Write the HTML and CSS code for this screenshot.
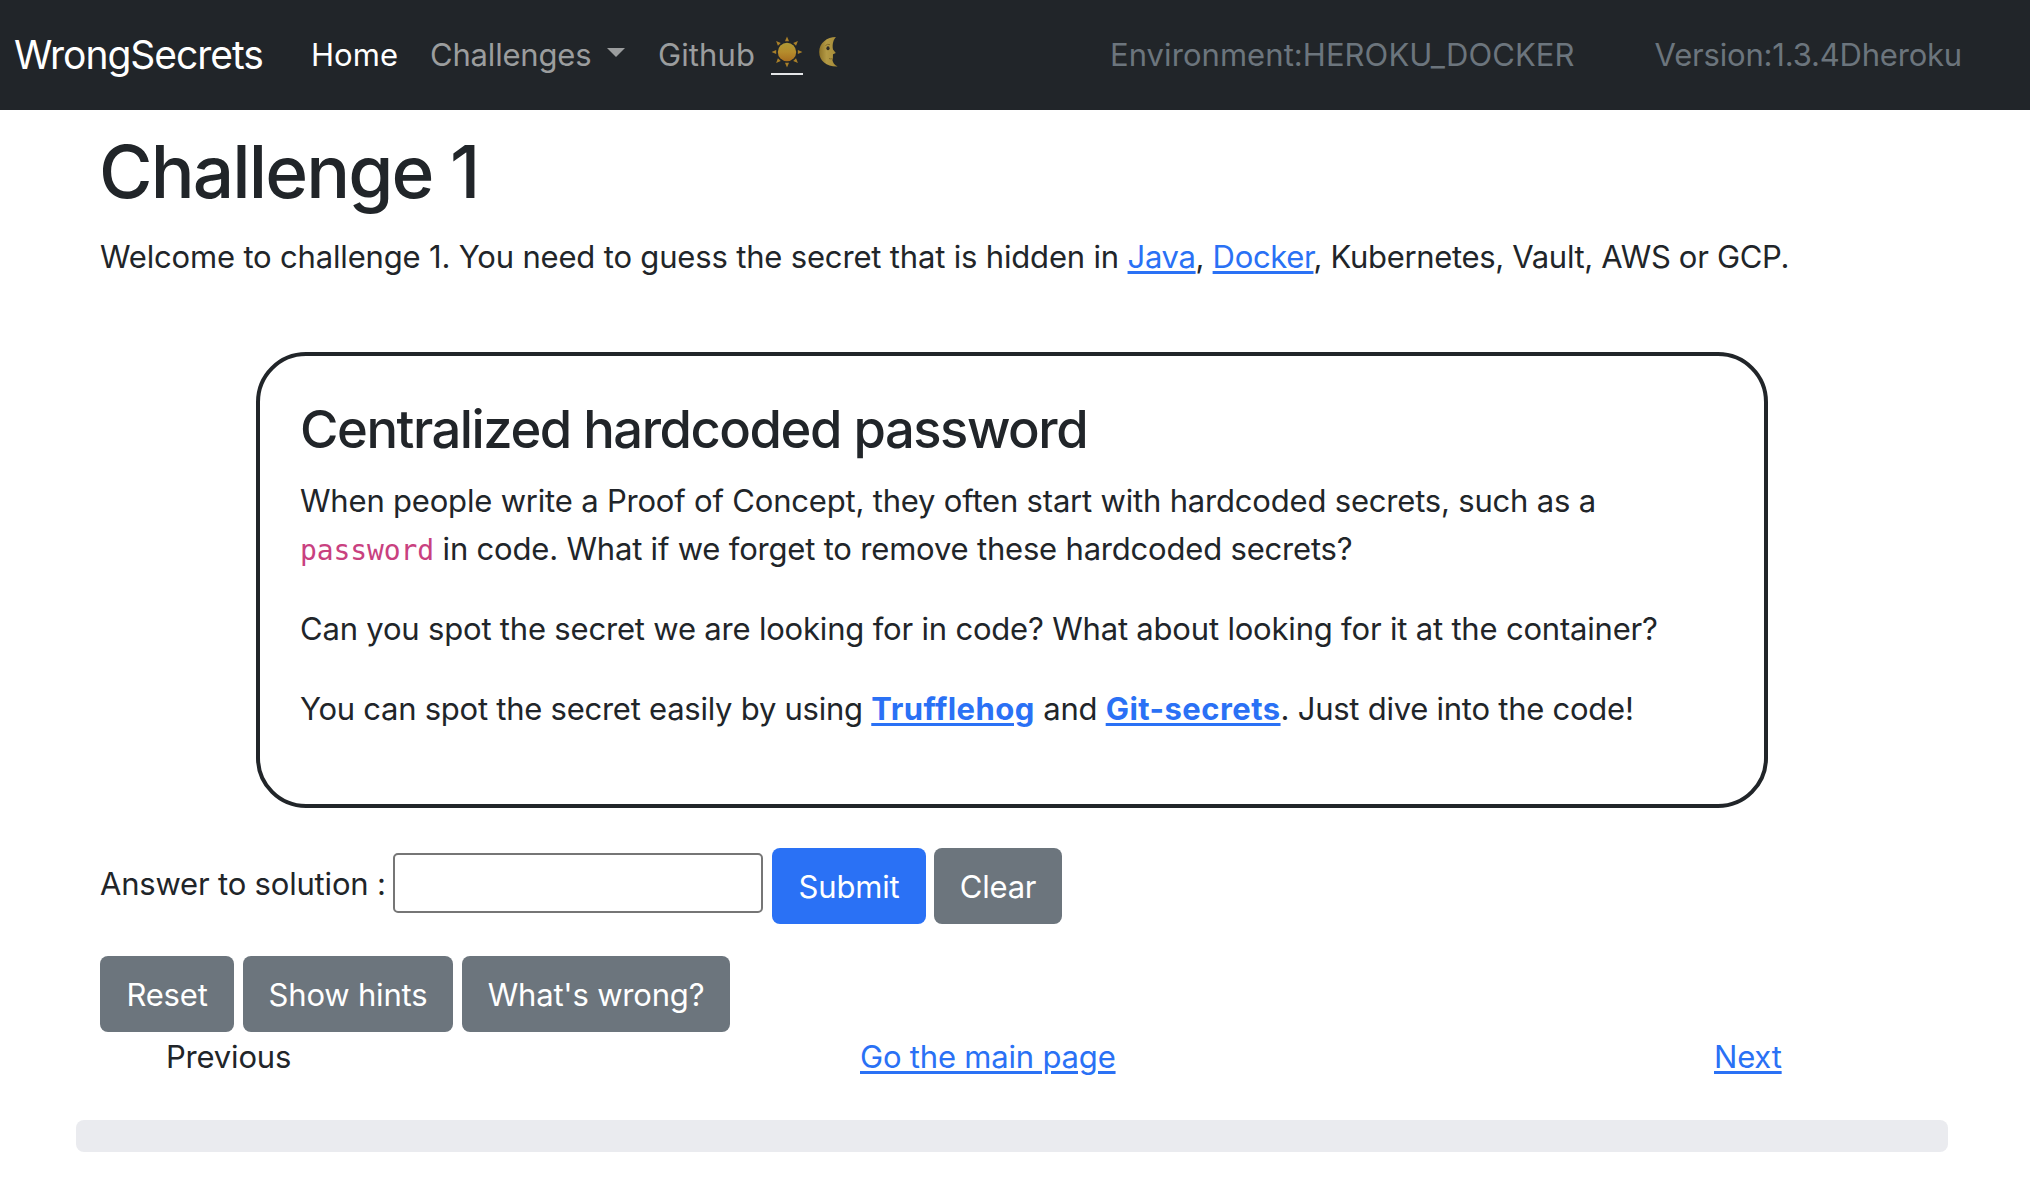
FILE: index.html
```html
<!DOCTYPE html>
<html lang="en">
<head>
<meta charset="utf-8">
<title>WrongSecrets</title>
<link rel="stylesheet" href="styles.css">
</head>
<body>
<nav class="navbar">
  <a class="brand" href="#">WrongSecrets</a>
  <a class="nav-link active" href="#">Home</a>
  <a class="nav-link challenges" href="#">Challenges<span class="caret"></span></a>
  <a class="nav-link github" href="#">Github</a>
  <a class="theme sun" href="#" aria-label="Light mode">
    <svg width="32" height="32" viewBox="0 0 32 32">
      <defs><linearGradient id="sunFill" x1="0" y1="0" x2="0" y2="1"><stop offset="0" stop-color="#af9a35"/><stop offset=".5" stop-color="#b58c2c"/><stop offset="1" stop-color="#a86f20"/></linearGradient></defs>
      <g fill="#aa8029">
        <path id="ray" d="M16 .6l2 4.6h-4z"/>
        <use href="#ray" transform="rotate(45 16 16)"/><use href="#ray" transform="rotate(90 16 16)"/><use href="#ray" transform="rotate(135 16 16)"/><use href="#ray" transform="rotate(180 16 16)"/><use href="#ray" transform="rotate(225 16 16)"/><use href="#ray" transform="rotate(270 16 16)"/><use href="#ray" transform="rotate(315 16 16)"/>
      </g>
      <circle cx="16" cy="16" r="9.2" fill="url(#sunFill)"/>
    </svg>
  </a>
  <a class="theme moon" href="#" aria-label="Dark mode">
    <svg width="20" height="32" viewBox="0 0 20 32">
      <defs><linearGradient id="moonFill" x1="0" y1="0" x2="1" y2="0"><stop offset="0" stop-color="#8f7428"/><stop offset=".4" stop-color="#b39a45"/><stop offset="1" stop-color="#a58a36"/></linearGradient></defs>
      <path fill="url(#moonFill)" d="M17 1C8 1 .2 7 .2 16S8 31 18.600 30.600C15.500 29 13.700 26.500 13.400 24C14.300 22.500 13.800 20.500 14 18.300L16.800 17L14 13.500C13 8 14.500 3.500 17 1Z"/>
      <ellipse cx="9" cy="12.200" rx="1.600" ry="2" fill="#2e2c29"/>
      <path d="M6.500 9.500q2-2 4.500-.8M10 22.500q2 1 3.500 0" fill="none" stroke="#7d6627" stroke-width=".9"/>
    </svg>
  </a>
  <span class="meta environment">Environment:HEROKU_DOCKER</span>
  <span class="meta version">Version:1.3.4Dheroku</span>
</nav>
<main>
  <h1>Challenge 1</h1>
  <p class="intro">Welcome to challenge 1. You need to guess the secret that is hidden in <span class="topics"><a href="#">Java</a>, <a href="#">Docker</a>, Kubernetes, Vault, AWS or GCP.</span></p>
  <section class="explanation">
    <h2>Centralized hardcoded password</h2>
    <p>When people write a Proof of Concept, they often start with hardcoded secrets, such as a <code>password</code> in code. What if we forget to remove these hardcoded secrets?</p>
    <p>Can you spot the secret we are looking for in code? What about looking for it at the container?</p>
    <p class="tools">You can spot the secret easily by using <a class="strong" href="#">Trufflehog</a> and <a class="strong" href="#">Git-secrets</a>. Just dive into the code!</p>
  </section>
  <form class="answer">
    <label for="solution">Answer to solution :</label>
    <input id="solution" type="text">
    <button class="btn primary submit" type="button">Submit</button>
    <button class="btn clear" type="button">Clear</button>
  </form>
  <div class="actions">
    <button class="btn reset" type="button">Reset</button>
    <button class="btn hints" type="button">Show hints</button>
    <button class="btn wrong" type="button">What's wrong?</button>
  </div>
  <div class="pager"><span>Previous</span><span><a href="#">Go the main page</a></span><span><a href="#">Next</a></span></div>
</main>
<div class="progress"></div>
</body>
</html>
```
FILE: styles.css
```css
* { box-sizing: border-box; }
body {
  margin: 0;
  background: #fff;
  color: #212529;
  font: 400 31px/48px Inter, "Liberation Sans", sans-serif;
  letter-spacing: -0.19px;
}
a { color: #2a71f5; text-decoration: underline; text-decoration-thickness: 3px; text-underline-offset: 3px; }
h1, h2, p { margin: 0; }

.navbar {
  display: flex;
  align-items: center;
  height: 110px;
  padding-left: 14px;
  background: #212529;
  white-space: nowrap;
}
.navbar a { text-decoration: none; }
.navbar .brand { width: 297px; color: #fff; font-size: 39px; letter-spacing: -1.03px; }
.navbar .nav-link { color: #9b9d9e; }
.navbar .active { width: 119px; color: #fff; letter-spacing: 0.05px; }
.challenges { display: flex; width: 228px; }
.caret {
  width: 0;
  height: 0;
  margin: 17px 0 0 16px;
  border: 9.5px solid transparent;
  border-top-color: #9b9d9e;
  border-bottom: 0;
}
.github { width: 113px; letter-spacing: 0.1px; }
.theme { display: flex; height: 39px; }
.sun { width: 32px; border-bottom: 2px solid #e4e6e8; }
.moon { margin-left: 16px; }
.meta { color: #6c757d; }
.environment { margin-left: 271px; letter-spacing: 0.06px; }
.version { margin-left: 80px; }

main { padding: 17px 0 0 100px; }
h1 { margin: 0 0 17px -1px; font-size: 73px; font-weight: 500; line-height: 89px; letter-spacing: -1.9px; }
.intro { letter-spacing: -0.17px; }
.topics { letter-spacing: -0.32px; }
.explanation {
  width: 1512px;
  height: 456px;
  margin: 71px 0 0 156px;
  padding: 40.700px 41px 40px 40px;
  border: 4px solid #212529;
  border-radius: 50px;
}
h2 { margin-bottom: 16px; font-size: 52.500px; font-weight: 500; line-height: 64px; letter-spacing: -1.47px; }
.explanation p { margin-bottom: 32px; }
code { color: #c9417f; font: 28px "DejaVu Sans Mono", monospace; letter-spacing: -0.1px; }
.explanation .tools { letter-spacing: -0.25px; }
.strong { font-weight: 700; letter-spacing: 0.45px; }

.answer, .actions { display: flex; align-items: flex-start; height: 76px; }
.answer { margin-top: 40px; }
.answer label { width: 293px; padding-top: 12px; }
.answer input {
  width: 370px;
  height: 60px;
  margin: 5px 9px 0 0;
  border: 2px solid #767676;
  border-radius: 5px;
  background: #fff;
}
.btn {
  height: 76px;
  margin: 0 8px 0 0;
  padding: 2px 0 0;
  border: 0;
  border-radius: 8px;
  background: #6c757d;
  color: #fff;
  font: inherit;
  letter-spacing: inherit;
  text-align: center;
}
.primary { background: #2a71f5; }
.submit { width: 154px; }
.clear { width: 128px; }
.actions { margin-top: 32px; }
.reset { width: 134px; margin-right: 9px; }
.hints { width: 210px; margin-right: 9px; }
.wrong { width: 268px; }
.pager { display: grid; grid-template-columns: 694px 854px auto; padding: 1px 0 0 66px; }

.progress { width: 1872px; height: 32px; margin: 39px 0 0 76px; border-radius: 8px; background: #eaebef; }
```
